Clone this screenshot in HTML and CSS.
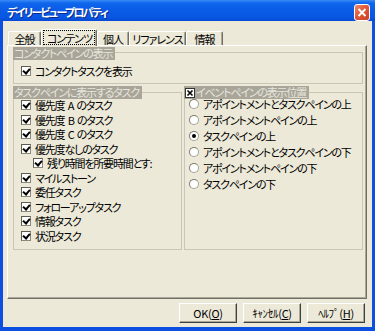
FILE: index.html
```html
<!DOCTYPE html>
<html lang="ja">
<head>
<meta charset="utf-8">
<link rel="stylesheet" href="styles.css">
</head>
<body>
<div class="win">
  <div class="titlebar">
    <span class="title">デイリービュープロパティ</span>
    <span class="close"><svg width="14" height="15" viewBox="0 0 14 15"><path d="M3.5 4 L10.5 11 M10.5 4 L3.5 11" stroke="#fff" stroke-width="2"/></svg></span>
  </div>
  <div class="client">
    <div class="tabs">
      <div class="tab t1">全般</div>
      <div class="tab sel t2"><span class="focus">コンテンツ</span></div>
      <div class="tab t3">個人</div>
      <div class="tab t4">リファレンス</div>
      <div class="tab t5">情報</div>
    </div>
    <div class="panel">
      <div class="ghead">コンタクトペインの表示</div>
      <div class="gbox g1">
        <div class="row"><span class="cb"></span>コンタクトタスクを表示</div>
      </div>
      <div class="cols">
        <div class="col left">
          <div class="ghead">タスクペインに表示するタスク</div>
          <div class="gbox g2">
            <div class="row"><span class="cb"></span>優先度 A のタスク</div>
            <div class="row"><span class="cb"></span>優先度 B のタスク</div>
            <div class="row"><span class="cb"></span>優先度 C のタスク</div>
            <div class="row"><span class="cb"></span>優先度なしのタスク</div>
            <div class="row sub"><span class="cb"></span>残り時間を所要時間とす:</div>
            <div class="row"><span class="cb"></span>マイルストーン</div>
            <div class="row"><span class="cb"></span>委任タスク</div>
            <div class="row"><span class="cb"></span>フォローアップタスク</div>
            <div class="row"><span class="cb"></span>情報タスク</div>
            <div class="row"><span class="cb"></span>状況タスク</div>
          </div>
        </div>
        <div class="col right">
          <div class="ghead"><svg class="xb" width="10" height="10" viewBox="0 0 10 10"><rect x="0.5" y="0.5" width="9" height="9" fill="#fff" stroke="#333"/><path d="M2.5 2.5 L7.5 7.5 M7.5 2.5 L2.5 7.5" stroke="#000" stroke-width="1.6"/></svg>イベントペインの表示位置</div>
          <div class="gbox g3">
            <div class="rrow"><span class="rb"></span>アポイントメントとタスクペインの上</div>
            <div class="rrow"><span class="rb"></span>アポイントメントペインの上</div>
            <div class="rrow"><span class="rb on"></span>タスクペインの上</div>
            <div class="rrow"><span class="rb"></span>アポイントメントとタスクペインの下</div>
            <div class="rrow"><span class="rb"></span>アポイントメントペインの下</div>
            <div class="rrow"><span class="rb"></span>タスクペインの下</div>
          </div>
        </div>
      </div>
    </div>
    <div class="buttons">
      <div class="btn">OK(<u>O</u>)</div>
      <div class="btn">ｷｬﾝｾﾙ(<u>C</u>)</div>
      <div class="btn">ﾍﾙﾌﾟ(<u>H</u>)</div>
    </div>
  </div>
</div>
</body>
</html>
```
FILE: styles.css
```css
* { box-sizing: border-box; }
html, body { margin: 0; padding: 0; }
body {
  width: 375px;
  height: 331px;
  overflow: hidden;
  font-family: "Noto Sans CJK JP", sans-serif;
  font-size: 11px;
  letter-spacing: -1.2px;
  word-spacing: 2px;
  color: #000;
  font-feature-settings: "palt";
}
.win {
  width: 375px;
  height: 331px;
  display: flex;
  flex-direction: column;
  background: #0d4fe0;
}
.titlebar {
  height: 21px;
  flex: none;
  display: flex;
  align-items: center;
  justify-content: space-between;
  padding: 0 5px 0 7px;
  background: linear-gradient(to bottom, #3a8cf6 0, #0f66ec 3px, #0a5be6 50%, #0856e1 85%, #0649d6 100%);
}
.title {
  color: #fff;
  font-weight: bold;
  font-size: 11px;
  letter-spacing: -1.7px;
  text-shadow: 1px 1px 0 #0b2a8a;
  margin-top: 2px;
}
.close {
  width: 16px;
  height: 17px;
  margin-top: 4px;
  border: 1px solid #fff;
  border-radius: 3px;
  background: linear-gradient(135deg, #f08a6a 0, #e0583a 45%, #c8432a 100%);
  display: flex;
  align-items: center;
  justify-content: center;
}
.client {
  flex: 1;
  margin: 0 3px 4px;
  background: #ece9d8;
  padding: 8px 5px 0 4px;
}
.tabs {
  display: flex;
  align-items: flex-start;
  padding-left: 1px;
}
.tab {
  height: 14px;
  margin-top: 2px;
  border-top: 1px solid #fff;
  border-left: 1px solid #fff;
  border-right: 1px solid #716f64;
  border-radius: 2px 2px 0 0;
  box-shadow: inset -1px 0 0 #aca899;
  display: flex;
  align-items: center;
  justify-content: center;
  line-height: 12px;
  white-space: nowrap;
  padding-top: 1px;
  letter-spacing: -1px;
}
.tab.sel {
  height: 17px;
  margin-top: 0;
  margin-bottom: -1px;
  position: relative;
  z-index: 2;
  background: #ece9d8;
  padding-top: 0;
  padding-bottom: 2px;
}
.focus {
  outline: 1px dotted #000;
  padding: 1px 2px 0 3px;
  line-height: 12px;
}
.t1 { width: 33px; }
.t2 { width: 56px; }
.t3 { width: 32px; }
.t4 { width: 57px; }
.t5 { width: 37px; }
.panel {
  width: 360px;
  height: 254px;
  border-top: 1px solid #fff;
  border-left: 1px solid #fff;
  border-right: 1px solid #716f64;
  border-bottom: 1px solid #716f64;
  box-shadow: inset -1px -1px 0 #aca899;
  padding: 1px 3px 0 5px;
  display: flex;
  flex-direction: column;
}
.ghead {
  position: relative;
  z-index: 1;
  width: fit-content;
  height: 13px;
  line-height: 13px;
  padding: 0 3px 0 1px;
  background: #a9a699;
  color: #e6e5de;
  display: flex;
  align-items: center;
  white-space: nowrap;
}
.gbox {
  border: 1px solid #cac6b6;
  margin-top: -7px;
}
.g1 {
  margin-top: -8px;
  padding: 10px 0 5px;
}
.cols {
  display: flex;
  gap: 2px;
  margin-top: 2px;
}
.col {
  display: flex;
  flex-direction: column;
}
.col.left { width: 169px; }
.col.right { width: 179px; }
.g2 {
  height: 158px;
  padding-top: 5px;
  overflow: hidden;
}
.g3 {
  height: 158px;
  padding-top: 3px;
}
.row {
  height: 14.5px;
  display: flex;
  align-items: center;
  white-space: nowrap;
}
.g1 .row { height: 15px; }
.cb {
  flex: none;
  position: relative;
  width: 10px;
  height: 10px;
  margin: 0 4px 0 7px;
  background: #fff;
  border: 1px solid #8a8878;
  border-top-color: #5e5c52;
  border-left-color: #5e5c52;
}
.cb::after {
  content: "";
  position: absolute;
  left: 2px;
  top: 0px;
  width: 3px;
  height: 5px;
  border-right: 2px solid #000;
  border-bottom: 2px solid #000;
  transform: rotate(40deg);
}
.row.sub .cb { margin-left: 19px; }
.xb {
  flex: none;
  margin-right: 1px;
}
.rrow {
  height: 16px;
  display: flex;
  align-items: center;
  white-space: nowrap;
}
.rb {
  flex: none;
  position: relative;
  width: 10px;
  height: 10px;
  margin: 0 4px 0 4px;
  border-radius: 50%;
  background: #fff;
  border: 1px solid #a3a192;
  border-top-color: #7d7b6e;
  border-left-color: #7d7b6e;
}
.rb.on::after {
  content: "";
  position: absolute;
  left: 2px;
  top: 2px;
  width: 4px;
  height: 4px;
  border-radius: 50%;
  background: #000;
}
.buttons {
  display: flex;
  justify-content: flex-end;
  gap: 6px;
  margin-top: 4px;
  padding-right: 2px;
}
.btn {
  width: 58px;
  height: 20px;
  border-top: 1px solid #fff;
  border-left: 1px solid #fff;
  border-right: 1px solid #404040;
  border-bottom: 1px solid #404040;
  box-shadow: inset -1px -1px 0 #aca899;
  display: flex;
  align-items: center;
  justify-content: center;
  font-size: 11px;
  letter-spacing: -0.3px;
  word-spacing: 0;
}
.btn u { text-underline-offset: 1px; }
```
